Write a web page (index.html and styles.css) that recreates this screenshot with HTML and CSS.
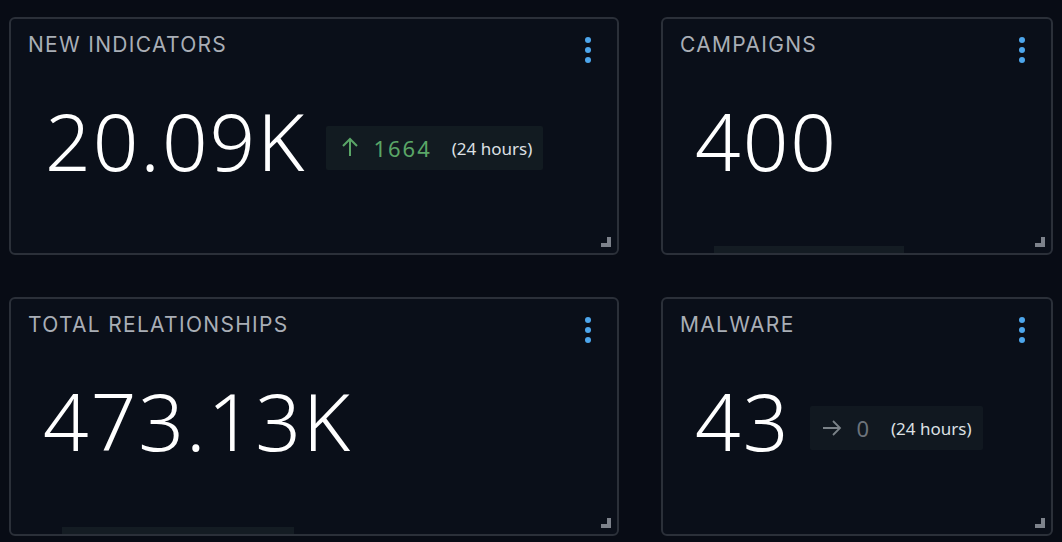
FILE: index.html
```html
<!DOCTYPE html>
<html>
<head>
<meta charset="utf-8">
<link rel="stylesheet" href="styles.css">
</head>
<body>
<div class="grid">
  <section class="card">
    <header class="head"><h2 class="title">NEW INDICATORS</h2><span class="kebab"><i></i><i></i><i></i></span></header>
    <div class="body pad-a">
      <span class="big">20.09K</span>
      <span class="badge">
        <svg class="arrow up" width="18" height="20" viewBox="0 0 18 20"><path d="M9 19V2M2 9l7-7 7 7" fill="none" stroke="currentColor" stroke-width="2"/></svg>
        <span class="delta pos">1664</span>
        <span class="period">(24 hours)</span>
      </span>
    </div>
    <span class="grip"></span>
  </section>
  <section class="card">
    <header class="head"><h2 class="title">CAMPAIGNS</h2><span class="kebab"><i></i><i></i><i></i></span></header>
    <div class="body pad-b">
      <span class="big">400</span>
    </div>
    <span class="scroll s2"></span>
    <span class="grip"></span>
  </section>
  <section class="card">
    <header class="head"><h2 class="title">TOTAL RELATIONSHIPS</h2><span class="kebab"><i></i><i></i><i></i></span></header>
    <div class="body pad-c">
      <span class="big">473.13K</span>
    </div>
    <span class="scroll s3"></span>
    <span class="grip"></span>
  </section>
  <section class="card">
    <header class="head"><h2 class="title">MALWARE</h2><span class="kebab"><i></i><i></i><i></i></span></header>
    <div class="body pad-b">
      <span class="big">43</span>
      <span class="badge b2">
        <svg class="arrow right" width="20" height="18" viewBox="0 0 20 18"><path d="M1 9h17M11 2l7 7-7 7" fill="none" stroke="currentColor" stroke-width="1.8"/></svg>
        <span class="delta zero">0</span>
        <span class="period">(24 hours)</span>
      </span>
    </div>
    <span class="grip"></span>
  </section>
</div>
</body>
</html>
```
FILE: styles.css
```css
html, body {
  margin: 0;
  padding: 0;
  background: #080c15;
  font-family: "Noto Sans", "Open Sans", sans-serif;
}
.grid {
  display: grid;
  grid-template-columns: 610px 392px;
  grid-template-rows: 238px 239px;
  column-gap: 42px;
  row-gap: 42px;
  padding: 17px 9px 0 9px;
}
.card {
  position: relative;
  box-sizing: border-box;
  border: 2px solid #2b3039;
  border-radius: 6px;
  background: #0a0f19;
  display: flex;
  flex-direction: column;
  overflow: hidden;
}
.head {
  display: flex;
  justify-content: space-between;
  align-items: flex-start;
  padding: 13px 20px 0 17px;
}
.title {
  margin: 0;
  font-family: "Inter", "Noto Sans", sans-serif;
  font-size: 21px;
  font-weight: 400;
  color: #a9aeb6;
  letter-spacing: 1.3px;
  line-height: 26px;
}
.kebab {
  display: flex;
  flex-direction: column;
  gap: 4px;
  padding-top: 5px;
  margin-right: 6px;
}
.kebab i {
  display: block;
  width: 6px;
  height: 6px;
  border-radius: 50%;
  background: #4da6ec;
}
.body {
  display: flex;
  align-items: center;
  margin-top: 33px;
}
.pad-a { padding-left: 34px; }
.pad-b { padding-left: 32px; }
.pad-c { padding-left: 32px; }
.big {
  font-size: 80px;
  font-weight: 300;
  color: #ffffff;
  line-height: 88px;
  letter-spacing: 2px;
}
.badge {
  display: inline-flex;
  align-items: center;
  height: 44px;
  margin-left: 20px;
  margin-top: 16px;
  padding: 0 11px 0 15px;
  background: #121b21;
  border-radius: 2px;
}
.b2 {
  background: #111820;
  margin-left: 20px;
  padding-left: 12px;
}
.arrow.up { color: #5aa667; margin-right: 14px; margin-top: -2px; }
.arrow.right { color: #7b8288; margin-right: 14px; }
.delta {
  font-size: 22px;
  letter-spacing: 2px;
  margin-right: 20px;
}
.delta.pos { color: #5aa667; }
.delta.zero { color: #6c737b; margin-right: 20px; }
.period {
  font-size: 17px;
  color: #dde0e4;
}
.grip {
  position: absolute;
  right: 6px;
  bottom: 6px;
  width: 10px;
  height: 10px;
  background:
    linear-gradient(#7d828b, #7d828b) right top / 4px 10px no-repeat,
    linear-gradient(#7d828b, #7d828b) left bottom / 10px 4px no-repeat;
}
.scroll {
  position: absolute;
  bottom: 0;
  height: 7px;
  background: #141c23;
}
.s2 { left: 51px; width: 190px; }
.s3 { left: 51px; width: 232px; }
```
